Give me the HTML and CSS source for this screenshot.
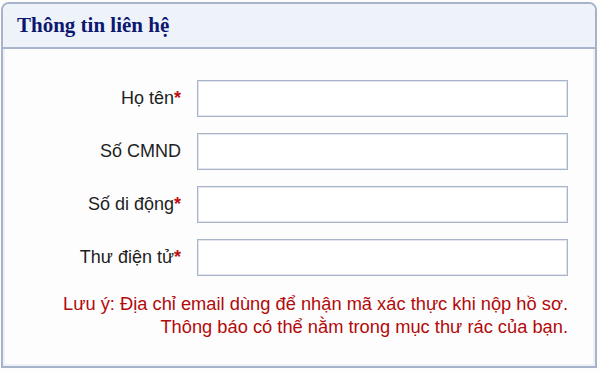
FILE: index.html
```html
<!DOCTYPE html>
<html lang="vi">
<head>
    <meta charset="UTF-8">
    <meta name="viewport" content="width=device-width, initial-scale=1.0">
    <title>Thông tin liên hệ</title>
    <link rel="stylesheet" href="styles.css">
</head>
<body>
    <div class="panel">
        <div class="panel-header">
            <h2>Thông tin liên hệ</h2>
        </div>
        <div class="panel-body">
            <div class="form-grid">
                <label class="field-label" for="ho-ten">Họ tên<span class="req">*</span></label>
                <input type="text" id="ho-ten" class="field-input">

                <label class="field-label" for="so-cmnd">Số CMND</label>
                <input type="text" id="so-cmnd" class="field-input">

                <label class="field-label" for="so-di-dong">Số di động<span class="req">*</span></label>
                <input type="text" id="so-di-dong" class="field-input">

                <label class="field-label" for="thu-dien-tu">Thư điện tử<span class="req">*</span></label>
                <input type="text" id="thu-dien-tu" class="field-input">
            </div>
            <p class="note">
                Lưu ý: Địa chỉ email dùng để nhận mã xác thực khi nộp hồ sơ.<br>
                Thông báo có thể nằm trong mục thư rác của bạn.
            </p>
        </div>
    </div>
</body>
</html>
```

FILE: styles.css
```css
body {
    margin: 0;
    padding: 2px 3px 0 1px;
    background-color: #fdfdfe;
    font-family: "Liberation Sans", Arial, sans-serif;
}
.panel {
    border: 2px solid #a7b3cb;
    border-radius: 8px 8px 0 0;
    background: #fdfdfe;
    height: 366px;
    box-sizing: border-box;
    box-shadow: inset 0 0 0 2px #eef1f6;
}
.panel-header {
    height: 43px;
    background-color: #eef3fa;
    border-bottom: 2px solid #a9b5cc;
    border-radius: 6px 6px 0 0;
    padding-left: 14px;
    display: flex;
    align-items: center;
}
.panel-header h2 {
    margin: 0;
    font-family: "Liberation Serif", "Times New Roman", serif;
    font-size: 21px;
    font-weight: bold;
    color: #0c1870;
}
.panel-body {
    padding: 31px 27px 0 0;
}
.form-grid {
    display: grid;
    grid-template-columns: 178px 371px;
    column-gap: 16px;
    row-gap: 16px;
    align-items: center;
}
.field-label {
    text-align: right;
    font-size: 18px;
    color: #1e1e1e;
}
.req {
    color: #c01010;
    font-weight: bold;
}
.field-input {
    height: 37px;
    box-sizing: border-box;
    border: 1px solid #a9b4c9;
    box-shadow: inset 0 0 0 1px #e1e6ee;
    background: #ffffff;
    padding: 0 6px;
    font-size: 15px;
}
.note {
    margin: 16px 0 0 0;
    text-align: right;
    font-size: 18.3px;
    line-height: 23px;
    color: #b20a0a;
}
```
